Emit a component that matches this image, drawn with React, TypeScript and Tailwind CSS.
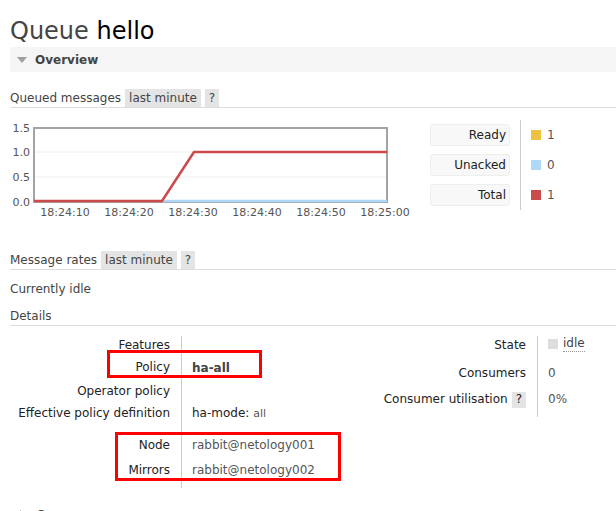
const yTicks = [
  { label: "1.5", y: 13 },
  { label: "1.0", y: 37 },
  { label: "0.5", y: 62 },
  { label: "0.0", y: 87 },
];

const xTicks = ["18:24:10", "18:24:20", "18:24:30", "18:24:40", "18:24:50", "18:25:00"];

const legend = [
  { name: "Ready", value: 1, color: "bg-[#edc240]" },
  { name: "Unacked", value: 0, color: "bg-[#afd8f8]" },
  { name: "Total", value: 1, color: "bg-[#cb4b4b]" },
];

const Tag = ({ children }: { children: React.ReactNode }) => (
  <span className="ml-[4px] bg-[#e4e4e4] px-[4px] leading-[18px] text-[#444]">{children}</span>
);

const Chart = () => (
  <svg width="410" height="105" className="block shrink-0">
    {yTicks.map((t) => (
      <text key={t.label} x="20" y={t.y + 4} textAnchor="end" fontSize="11" fill="#555" fontFamily="DejaVu Sans, Verdana, sans-serif">
        {t.label}
      </text>
    ))}
    {xTicks.map((t, i) => (
      <text key={t} x={55 + i * 64} y={101} textAnchor="middle" fontSize="11" fill="#555" fontFamily="DejaVu Sans, Verdana, sans-serif">
        {t}
      </text>
    ))}
    <line x1="24" y1="37" x2="376" y2="37" stroke="#eee" />
    <line x1="24" y1="62" x2="376" y2="62" stroke="#eee" />
    <rect x="24" y="13" width="353" height="74" fill="none" stroke="#a3a3a3" strokeWidth="2" />
    <polyline points="152,86 377,86" fill="none" stroke="#afd8f8" strokeWidth="2.5" />
    <polyline points="24,86 152,86 184,37 377,37" fill="none" stroke="#cb4b4b" strokeWidth="2.5" strokeLinejoin="round" />
  </svg>
);

const Label = ({ children, h }: { children: React.ReactNode; h: string }) => (
  <div className={`${h} pr-[11px] text-right leading-[18px] text-[#222]`}>{children}</div>
);

const Value = ({ children, h }: { children?: React.ReactNode; h: string }) => (
  <div className={`${h} border-l border-[#ccc] pl-[10px] leading-[18px] text-[#555]`}>{children}</div>
);

export default function App() {
  return (
    <div className="h-[511px] overflow-hidden bg-white pl-[10px] font-['DejaVu_Sans',Verdana,sans-serif] text-[12px] text-[#444]">
      <h1 className="pt-[17px] text-[24px] leading-[29px] text-[#444]">
        Queue <span className="text-black">hello</span>
      </h1>

      <div className="mt-[1px] flex h-[25px] items-center bg-[#f5f5f5] pl-[7px]">
        <span className="mr-[8px] h-0 w-0 border-x-[5px] border-t-[6px] border-x-transparent border-t-[#a0a0a0]" />
        <span className="font-bold text-[#444]">Overview</span>
      </div>

      <div className="mt-[17px] flex border-b border-[#ddd]">
        <span className="leading-[18px]">Queued messages</span>
        <Tag>last minute</Tag>
        <Tag>?</Tag>
      </div>

      <div className="mt-[7px] flex">
        <Chart />
        <div className="ml-[10px] mt-[5px] flex">
          <div className="flex flex-col gap-[8px] pt-[4px]">
            {legend.map((l) => (
              <div key={l.name} className="h-[22px] w-[80px] rounded-[3px] border border-[#eee] bg-[#f8f8f8] pr-[3px] text-right leading-[20px] text-[#222]">
                {l.name}
              </div>
            ))}
          </div>
          <div className="ml-[10px] h-[90px] border-l border-[#ccc]" />
          <div className="flex flex-col gap-[8px] pl-[10px] pt-[4px]">
            {legend.map((l) => (
              <div key={l.name} className="flex h-[22px] items-center">
                <span className={`mr-[6px] h-[10px] w-[10px] ${l.color}`} />
                <span className="text-[#555]">{l.value}</span>
              </div>
            ))}
          </div>
        </div>
      </div>

      <div className="mt-[31px] flex border-b border-[#ddd]">
        <span className="leading-[18px]">Message rates</span>
        <Tag>last minute</Tag>
        <Tag>?</Tag>
      </div>

      <div className="mt-[10px] leading-[18px]">Currently idle</div>
      <div className="mt-[9px] border-b border-[#ddd] leading-[18px]">Details</div>

      <div className="mt-[10px] flex items-start">
        <div className="relative grid w-[370px] grid-cols-[171px_1fr]">
          <Label h="h-[22px]">Features</Label>
          <Value h="h-[22px]" />
          <Label h="h-[24px]">Policy</Label>
          <Value h="h-[24px]">
            <span className="relative top-[1px] font-bold text-[#444]">ha-all</span>
          </Value>
          <Label h="h-[22px]">Operator policy</Label>
          <Value h="h-[22px]" />
          <Label h="h-[32px]">Effective policy definition</Label>
          <Value h="h-[32px]">
            <span className="text-[#222]">ha-mode: </span>
            <span className="text-[11px]">all</span>
          </Value>
          <Label h="h-[25px]">Node</Label>
          <Value h="h-[25px]">rabbit@netology001</Value>
          <Label h="h-[27px]">Mirrors</Label>
          <Value h="h-[27px]">rabbit@netology002</Value>

          <div className="pointer-events-none absolute left-[97px] top-[14px] h-[28px] w-[155px] border-[3px] border-[#ff0000]" />
          <div className="pointer-events-none absolute left-[105px] top-[96px] h-[49px] w-[226px] border-[3px] border-[#ff0000]" />
        </div>

        <div className="grid grid-cols-[157px_1fr]">
          <Label h="h-[28px]">State</Label>
          <Value h="h-[28px]">
            <span className="inline-flex items-center">
              <span className="mr-[5px] h-[10px] w-[10px] bg-[#ddd]" />
              <span className="border-b border-dotted border-[#999] leading-[15px] text-[#444]">idle</span>
            </span>
          </Value>
          <Label h="h-[26px]">Consumers</Label>
          <Value h="h-[26px]">0</Value>
          <Label h="h-[27px]">
            Consumer utilisation
            <span className="ml-[4px] bg-[#e4e4e4] px-[4px] pb-[2px]">?</span>
          </Label>
          <Value h="h-[27px]">0%</Value>
        </div>
      </div>

      <div className="mt-[18px] flex items-center">
        <span className="ml-[10px] mr-[10px] h-0 w-0 border-y-[5px] border-l-[6px] border-y-transparent border-l-[#a0a0a0]" />
        <span className="font-bold leading-[18px]">Consumers</span>
      </div>
    </div>
  );
}
